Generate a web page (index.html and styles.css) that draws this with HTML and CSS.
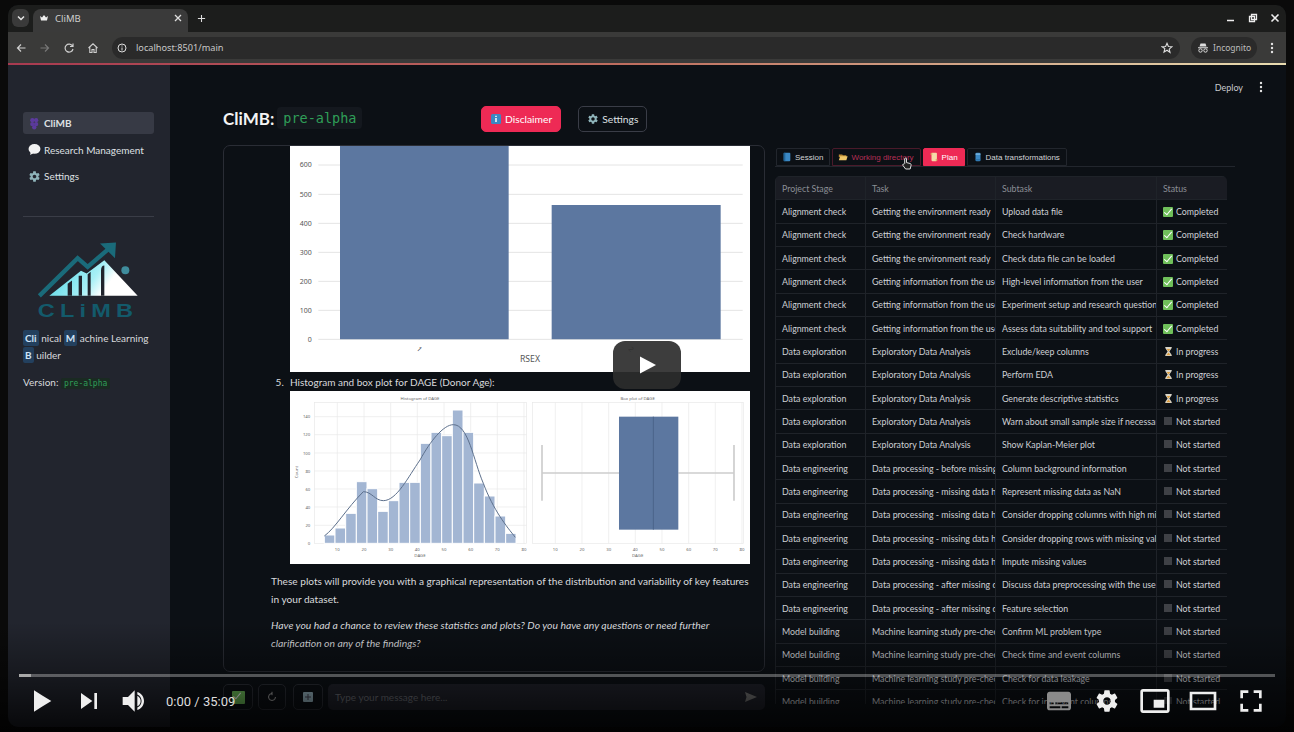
FILE: index.html
```html
<!DOCTYPE html>
<html>
	<head>
		<meta charset="utf-8">
		<title>CliMB</title>
		<link rel="stylesheet" href="styles.css">
	</head>
	<body>
		<svg class="defs">
			<symbol id="gear" viewBox="8 8 20 20"><path d="m23.94 18.78c.03-.25.05-.51.05-.78s-.02-.52-.05-.78l1.68-1.32c.15-.12.19-.33.09-.51l-1.6-2.76c-.09-.17-.31-.24-.48-.17l-1.99.8c-.41-.32-.86-.58-1.35-.78l-.3-2.12c-.02-.19-.19-.33-.39-.33h-3.2c-.2 0-.36.14-.39.33l-.3 2.12c-.48.2-.93.47-1.35.78l-1.99-.8c-.18-.07-.39 0-.48.17l-1.6 2.76c-.1.17-.05.39.09.51l1.68 1.32c-.03.25-.05.52-.05.78s.02.52.05.78l-1.68 1.32c-.15.12-.19.33-.09.51l1.6 2.76c.09.17.31.24.48.17l1.99-.8c.41.32.86.58 1.35.78l.3 2.12c.02.19.19.33.39.33h3.2c.2 0 .36-.14.39-.33l.3-2.12c.48-.2.93-.47 1.35-.78l1.99.8c.18.07.39 0 .48-.17l1.6-2.76c.09-.17.05-.39-.09-.51zm-5.94 2.01c-1.54 0-2.8-1.25-2.8-2.8s1.25-2.8 2.8-2.8 2.8 1.25 2.8 2.8-1.25 2.8-2.8 2.8z"/></symbol>
			<symbol id="kebab" viewBox="0 0 12 12"><circle cx="6" cy="2" r="1.2"/><circle cx="6" cy="6" r="1.2"/><circle cx="6" cy="10" r="1.2"/></symbol>
			<symbol id="book" viewBox="0 0 12 12"><rect x="2" y="1" width="8" height="10" rx="1" fill="#3b88c3"/><rect x="2" y="1" width="2" height="10" fill="#226699"/></symbol>
			<symbol id="can" viewBox="0 0 12 12"><rect x="3" y="1" width="6" height="10" rx="1.5" fill="#3b88c3"/><rect x="3" y="2" width="6" height="1" fill="#9fd0ee"/><rect x="3" y="9" width="6" height="1" fill="#1d5f8f"/></symbol>
			<symbol id="folder" viewBox="0 0 12 12"><path d="M1 3h4l1 1h4v2H1z" fill="#b98a35"/><path d="M1 10l1.5-5h9L10 10z" fill="#f0c869"/></symbol>
			<symbol id="scroll" viewBox="0 0 12 12"><rect x="3" y="1" width="6.5" height="10" rx="1" fill="#f6d9a8"/><rect x="2" y="1" width="2" height="3" rx="1" fill="#e0a868"/><rect x="8" y="8" width="2" height="3" rx="1" fill="#e0a868"/></symbol>
			<symbol id="hourglass" viewBox="0 0 12 12"><path d="M2.5 1h7v1.2L7 6l2.5 3.8V11h-7V9.800L5 6 2.500 2.200z" fill="#d8d4c8"/><path d="M4 3.200h4L6 6zM3.600 10 6 7l2.400 3z" fill="#e0a040"/></symbol>
		</svg>

		<div class="window">
			<div class="tabstrip">
				<span class="tab-search">
					<svg class="ico-10" viewBox="0 0 10 10"><path d="M2 3.500l3 3 3-3" fill="none" stroke="#e6e6e6" stroke-width="1.500"/></svg>
				</span>
				<div class="tab">
					<svg class="ico-10" viewBox="0 0 10 10"><path d="M1 3l2 1.500L5 2l2 2.500L9 3 8 7.500H2z" fill="#eee"/></svg>
					<span class="tab-title">CliMB</span>
					<svg class="ico-8" viewBox="0 0 8 8"><path d="M1 1l6 6M7 1L1 7" stroke="#ddd" stroke-width="1.300"/></svg>
				</div>
				<svg class="tab-new" viewBox="0 0 10 10"><path d="M5 1v8M1 5h8" stroke="#ddd" stroke-width="1.200"/></svg>
				<div class="win-controls">
					<svg class="ico-10" viewBox="0 0 10 10"><path d="M1 7.500h7" stroke="#eee" stroke-width="1.600"/></svg>
					<svg class="ico-10" viewBox="0 0 10 10"><path d="M3.500 1.500h5v5h-5zM1.500 3.500h5v5h-5z" fill="#151515" stroke="#eee" stroke-width="1.300"/></svg>
					<svg class="ico-10" viewBox="0 0 10 10"><path d="M1.500 1.500l7 7M8.500 1.500l-7 7" stroke="#eee" stroke-width="1.600"/></svg>
				</div>
			</div>

			<div class="toolbar">
				<svg class="nav-ico" viewBox="0 0 12 12"><path d="M10.500 6h-8M6 2.500L2.500 6 6 9.500" fill="none" stroke="#cfcfcf" stroke-width="1.200"/></svg>
				<svg class="nav-ico" viewBox="0 0 12 12"><path d="M1.500 6h8M6 2.500L9.500 6 6 9.500" fill="none" stroke="#777" stroke-width="1.200"/></svg>
				<svg class="nav-ico" viewBox="0 0 12 12"><path d="M9.500 4A4 4 0 1 0 10 7M10 1.500V4.500H7" fill="none" stroke="#cfcfcf" stroke-width="1.200"/></svg>
				<svg class="nav-ico" viewBox="0 0 12 12"><path d="M1.500 6L6 1.800 10.500 6M2.800 5v5.500h2.200V7.500h2v3h2.200V5" fill="none" stroke="#cfcfcf" stroke-width="1.100"/></svg>
				<div class="omnibox">
					<span class="omni-left">
						<svg class="ico-10" viewBox="0 0 10 10"><circle cx="5" cy="5" r="4" fill="none" stroke="#ddd"/><path d="M5 4.500v3M5 2.500v1" stroke="#ddd"/></svg>
						<span class="omni-url">localhost:8501/main</span>
					</span>
					<svg class="ico-12" viewBox="0 0 12 12"><path d="M6 1.300l1.400 3.200 3.400.3-2.600 2.300.8 3.400L6 8.200 3 10l.8-3.400L1.200 4.800l3.400-.3z" fill="none" stroke="#ddd" stroke-width="1.100"/></svg>
				</div>
				<div class="incognito">
					<svg class="ico-12" viewBox="0 0 12 12"><path d="M3.500 1.500h5l1 3h-7zM1 5.300h10v1H1z" fill="#ddd"/><circle cx="3.500" cy="8.500" r="1.700" fill="none" stroke="#ddd"/><circle cx="8.500" cy="8.500" r="1.700" fill="none" stroke="#ddd"/></svg>
					<span>Incognito</span>
				</div>
				<svg class="ico-12 kebab-light"><use href="#kebab"/></svg>
			</div>
			<div class="decoration"></div>

			<div class="app">
				<aside class="sidebar">
					<nav class="side-nav">
						<a class="side-link side-active">
							<svg class="side-ico" viewBox="0 0 12 12"><g fill="#5b3a9c"><circle cx="4" cy="3" r="2"/><circle cx="7.500" cy="3" r="2"/><circle cx="4" cy="6.500" r="2"/><circle cx="7.500" cy="6.500" r="2"/><circle cx="5.800" cy="9.500" r="2"/></g></svg>
							CliMB
						</a>
						<a class="side-link">
							<svg class="side-ico" viewBox="0 0 12 12"><ellipse cx="6" cy="5.500" rx="5.500" ry="4.500" fill="#f2f2f2"/><path d="M2.500 8L2 11l3.500-2z" fill="#f2f2f2"/></svg>
							Research Management
						</a>
						<a class="side-link">
							<svg class="side-ico gear-teal"><use href="#gear"/></svg>
							Settings
						</a>
					</nav>
					<hr class="side-rule">
					<svg class="logo" viewBox="110 55 315 245">
						<defs>
							<linearGradient id="peak" x1="0" y1="0" x2="1" y2="0.300">
								<stop offset="0" stop-color="#45d2e2"/>
								<stop offset="0.6" stop-color="#a8f0f6"/>
								<stop offset="0.8" stop-color="#ffffff"/>
							</linearGradient>
						</defs>
						<path d="M150 225L245 150 262 158 315 118 415 225z" fill="url(#peak)"/>
						<path d="M205 225v-36l13-10v46zM238 225v-60h10v60zM265 225v-65l9-7v72zM305 225v-75q0-16 10-16v91z" fill="#20242d"/>
						<path d="M120 225L235 112 265 138 335 78" fill="none" stroke="#1a6b7a" stroke-width="13"/>
						<path d="M302 68L350 65 347 112z" fill="#1a6b7a"/>
						<circle cx="378" cy="148" r="12" fill="#3f8c9c"/>
						<text class="logo-text" x="115" y="289" textLength="302" lengthAdjust="spacingAndGlyphs">CLiMB</text>
					</svg>
					<p class="side-blurb"><mark>Cli</mark> nical <mark>M</mark> achine Learning <mark>B</mark> uilder</p>
					<p class="side-version">Version: <code>pre-alpha</code></p>
				</aside>

				<main class="main">
					<div class="topbar">
						<span>Deploy</span>
						<svg class="ico-12 kebab-light"><use href="#kebab"/></svg>
					</div>
					<div class="title-row">
						<div class="title-block">
							<h1>CliMB:</h1>
							<code class="title-code">pre-alpha</code>
						</div>
						<button class="btn btn-primary">
							<svg class="ico-12" viewBox="0 0 12 12"><rect x="1" y="1" width="10" height="10" rx="1.500" fill="#3b88c3"/><path d="M6 5v4M6 2.800v1.200" stroke="#fff" stroke-width="1.500"/></svg>
							Disclaimer
						</button>
						<button class="btn">
							<svg class="ico-12 gear-teal"><use href="#gear"/></svg>
							Settings
						</button>
					</div>

					<div class="columns">
						<section class="chat-col">
							<div class="chat-panel">
								<div class="plot plot-bars">
									<svg viewBox="30 15 1380 678" class="plot-svg">
										<g stroke="#e4e4e4" stroke-width="3">
											<path d="M115 72H1388M115 160H1388M115 247H1388M115 334H1388M115 421H1388M115 508H1388M115 595H1388"/>
										</g>
										<path d="M180 15h506v580H180zM815 192h507v403H815z" fill="#5c77a0"/>
										<g class="plot-label" text-anchor="end">
											<text x="95" y="79">600</text>
											<text x="95" y="167">500</text>
											<text x="95" y="254">400</text>
											<text x="95" y="341">300</text>
											<text x="95" y="428">200</text>
											<text x="95" y="515">100</text>
											<text x="95" y="602">0</text>
										</g>
										<g class="plot-label" text-anchor="middle">
											<text x="418" y="632" transform="rotate(45 418 625)">1</text>
											<text x="1053" y="632" transform="rotate(45 1053 625)">2</text>
											<text class="plot-axis" x="750" y="664">RSEX</text>
										</g>
									</svg>
								</div>
								<ol class="chat-list" start="5">
									<li>Histogram and box plot for DAGE (Donor Age):
										<div class="plot plot-hist">
											<svg viewBox="30 33 1380 517" class="plot-svg">
												<g fill="none" stroke="#e8e8e8" stroke-width="2">
													<rect x="103" y="68" width="637" height="422"/>
													<rect x="757" y="68" width="633" height="422"/>
													<path d="M103 110H740M103 164H740M103 219H740M103 273H740M103 327H740M103 381H740M103 436H740"/>
													<path d="M172 68V490M252 68V490M332 68V490M412 68V490M492 68V490M572 68V490M652 68V490M732 68V490"/>
													<path d="M826 68V490M906 68V490M986 68V490M1066 68V490M1146 68V490M1226 68V490M1306 68V490M1386 68V490"/>
												</g>
												<g fill="#a3b6d3" stroke="#fff" stroke-width="3">
													<rect x="133" y="465" width="32" height="25"/>
													<rect x="165" y="444" width="32" height="46"/>
													<rect x="197" y="400" width="32" height="90"/>
													<rect x="229" y="305" width="32" height="185"/>
													<rect x="261" y="326" width="32" height="164"/>
													<rect x="293" y="394" width="32" height="96"/>
													<rect x="325" y="362" width="32" height="128"/>
													<rect x="357" y="307" width="32" height="183"/>
													<rect x="389" y="307" width="32" height="183"/>
													<rect x="421" y="190" width="32" height="300"/>
													<rect x="453" y="157" width="32" height="333"/>
													<rect x="485" y="167" width="32" height="323"/>
													<rect x="517" y="90" width="32" height="400"/>
													<rect x="549" y="157" width="32" height="333"/>
													<rect x="581" y="309" width="32" height="181"/>
													<rect x="613" y="348" width="32" height="142"/>
													<rect x="645" y="408" width="32" height="82"/>
													<rect x="677" y="460" width="31" height="30"/>
												</g>
												<path d="M133 468C165 445 200 385 250 335C275 335 285 362 310 362C350 362 385 290 420 240C450 185 490 134 520 134C565 134 580 240 610 310C640 390 680 440 706 472" fill="none" stroke="#5c6f8c" stroke-width="3"/>
												<path d="M788 279H1017M1195 279H1362M786 195V362M1362 195V362" fill="none" stroke="#cdcdcd" stroke-width="5"/>
												<rect x="1017" y="110" width="178" height="339" fill="#5c77a0"/>
												<path d="M1120 110V449" stroke="#4a638a" stroke-width="3"/>
												<g class="plot-tick" text-anchor="end">
													<text x="91" y="115">140</text>
													<text x="91" y="169">120</text>
													<text x="91" y="224">100</text>
													<text x="91" y="278">80</text>
													<text x="91" y="332">60</text>
													<text x="91" y="386">40</text>
													<text x="91" y="441">20</text>
													<text x="91" y="494">0</text>
												</g>
												<g class="plot-tick" text-anchor="middle">
													<text x="172" y="512">10</text>
													<text x="252" y="512">20</text>
													<text x="332" y="512">30</text>
													<text x="412" y="512">40</text>
													<text x="492" y="512">50</text>
													<text x="572" y="512">60</text>
													<text x="652" y="512">70</text>
													<text x="732" y="512">80</text>
													<text x="826" y="512">10</text>
													<text x="906" y="512">20</text>
													<text x="986" y="512">30</text>
													<text x="1066" y="512">40</text>
													<text x="1146" y="512">50</text>
													<text x="1226" y="512">60</text>
													<text x="1306" y="512">70</text>
													<text x="1386" y="512">80</text>
													<text x="420" y="60">Histogram of DAGE</text>
													<text x="1073" y="60">Box plot of DAGE</text>
													<text x="420" y="531">DAGE</text>
													<text x="1073" y="531">DAGE</text>
													<text x="58" y="280" transform="rotate(-90 54 280)">Count</text>
												</g>
											</svg>
										</div>
									</li>
								</ol>
								<p class="chat-text">These plots will provide you with a graphical representation of the distribution and variability of key features in your dataset.</p>
								<p class="chat-text"><em>Have you had a chance to review these statistics and plots? Do you have any questions or need further clarification on any of the findings?</em></p>
							</div>
							<div class="chat-input-row">
								<span class="square-btn square-wide"><i class="st-check st-check-big"></i></span>
								<span class="square-btn square-refresh">
									<svg class="ico-12" viewBox="0 0 12 12"><path d="M9.500 6A3.500 3.500 0 1 1 6 2.500M6 .8v3.400" fill="none" stroke="#aaa"/></svg>
								</span>
								<span class="square-btn square-wide">
									<svg class="ico-12" viewBox="0 0 12 12"><rect x="1" y="1" width="10" height="10" rx="1" fill="#9ab8c4"/><path d="M3 6h6M6 3v6" stroke="#445"/></svg>
								</span>
								<div class="chat-input">
									<span>Type your message here...</span>
									<svg class="ico-12" viewBox="0 0 12 12"><path d="M0 1l12 5L0 11l1.500-5z" fill="#777"/></svg>
								</div>
							</div>
						</section>

						<section class="plan-col">
							<div class="tabs">
								<span class="tab-btn"><svg class="ico-10"><use href="#book"/></svg>Session</span>
								<span class="tab-btn tab-hover"><svg class="ico-10"><use href="#folder"/></svg>Working directory
									<svg class="hand" viewBox="0 0 12 14"><path d="M4 7V2a1 1 0 0 1 2 0v4l4 1c1 .3 1 1 1 2l-1 4H5L2 9c-.6-.8.4-1.800 1.200-1.100z" fill="#222" stroke="#eee"/></svg>
								</span>
								<span class="tab-btn tab-active"><svg class="ico-10"><use href="#scroll"/></svg>Plan</span>
								<span class="tab-btn"><svg class="ico-10"><use href="#can"/></svg>Data transformations</span>
							</div>
							<div class="plan-table-wrap">
								<table class="plan-table">
									<colgroup><col class="col-stage"><col class="col-task"><col class="col-sub"><col class="col-status"></colgroup>
									<thead>
										<tr><th>Project Stage</th><th>Task</th><th>Subtask</th><th>Status</th></tr>
									</thead>
									<tbody>
										<tr><td>Alignment check</td><td>Getting the environment ready</td><td>Upload data file</td><td><i class="st-check"></i>Completed</td></tr>
										<tr><td>Alignment check</td><td>Getting the environment ready</td><td>Check hardware</td><td><i class="st-check"></i>Completed</td></tr>
										<tr><td>Alignment check</td><td>Getting the environment ready</td><td>Check data file can be loaded</td><td><i class="st-check"></i>Completed</td></tr>
										<tr><td>Alignment check</td><td>Getting information from the user</td><td>High-level information from the user</td><td><i class="st-check"></i>Completed</td></tr>
										<tr><td>Alignment check</td><td>Getting information from the user</td><td>Experiment setup and research question</td><td><i class="st-check"></i>Completed</td></tr>
										<tr><td>Alignment check</td><td>Getting information from the user</td><td>Assess data suitability and tool support</td><td><i class="st-check"></i>Completed</td></tr>
										<tr><td>Data exploration</td><td>Exploratory Data Analysis</td><td>Exclude/keep columns</td><td><svg class="st-glass"><use href="#hourglass"/></svg>In progress</td></tr>
										<tr><td>Data exploration</td><td>Exploratory Data Analysis</td><td>Perform EDA</td><td><svg class="st-glass"><use href="#hourglass"/></svg>In progress</td></tr>
										<tr><td>Data exploration</td><td>Exploratory Data Analysis</td><td>Generate descriptive statistics</td><td><svg class="st-glass"><use href="#hourglass"/></svg>In progress</td></tr>
										<tr><td>Data exploration</td><td>Exploratory Data Analysis</td><td>Warn about small sample size if necessary</td><td><i class="st-none"></i>Not started</td></tr>
										<tr><td>Data exploration</td><td>Exploratory Data Analysis</td><td>Show Kaplan-Meier plot</td><td><i class="st-none"></i>Not started</td></tr>
										<tr><td>Data engineering</td><td>Data processing - before missing data</td><td>Column background information</td><td><i class="st-none"></i>Not started</td></tr>
										<tr><td>Data engineering</td><td>Data processing - missing data handling</td><td>Represent missing data as NaN</td><td><i class="st-none"></i>Not started</td></tr>
										<tr><td>Data engineering</td><td>Data processing - missing data handling</td><td>Consider dropping columns with high missingness</td><td><i class="st-none"></i>Not started</td></tr>
										<tr><td>Data engineering</td><td>Data processing - missing data handling</td><td>Consider dropping rows with missing values</td><td><i class="st-none"></i>Not started</td></tr>
										<tr><td>Data engineering</td><td>Data processing - missing data handling</td><td>Impute missing values</td><td><i class="st-none"></i>Not started</td></tr>
										<tr><td>Data engineering</td><td>Data processing - after missing data</td><td>Discuss data preprocessing with the user</td><td><i class="st-none"></i>Not started</td></tr>
										<tr><td>Data engineering</td><td>Data processing - after missing data</td><td>Feature selection</td><td><i class="st-none"></i>Not started</td></tr>
										<tr><td>Model building</td><td>Machine learning study pre-checks</td><td>Confirm ML problem type</td><td><i class="st-none"></i>Not started</td></tr>
										<tr><td>Model building</td><td>Machine learning study pre-checks</td><td>Check time and event columns</td><td><i class="st-none"></i>Not started</td></tr>
										<tr><td>Model building</td><td>Machine learning study pre-checks</td><td>Check for data leakage</td><td><i class="st-none"></i>Not started</td></tr>
										<tr><td>Model building</td><td>Machine learning study pre-checks</td><td>Check for irrelevant columns</td><td><i class="st-none"></i>Not started</td></tr>
									</tbody>
								</table>
							</div>
						</section>
					</div>
				</main>
			</div>
		</div>

		<!-- video player chrome sits over the whole page -->
		<div class="yt-shade"></div>
		<div class="yt-bigplay">
			<svg class="yt-bigplay-ico" viewBox="0 0 24 24"><path d="M5 3.500L21 12 5 20.500z" fill="#fff"/></svg>
		</div>
		<div class="yt-player">
			<div class="yt-progress"><div class="yt-played"></div></div>
			<div class="yt-controls">
				<div class="yt-group">
					<svg class="yt-ico" viewBox="0 0 36 36"><path d="M12 26l6.500-4v-8L12 10zM18.500 22L25 18l-6.500-4z"/></svg>
					<svg class="yt-ico" viewBox="0 0 36 36"><path d="M12 24l8.500-6L12 12zM22 12v12h2V12z"/></svg>
					<svg class="yt-ico" viewBox="0 0 36 36"><path d="M8 21h4l5 5V10l-5 5H8zM19 14v8c1.480-.68 2.500-2.230 2.500-4 0-1.740-1.020-3.260-2.500-4zM19 11.290c2.890.86 5 3.540 5 6.710s-2.110 5.850-5 6.710v-1.800c1.900-.8 3.200-2.700 3.200-4.910s-1.300-4.110-3.200-4.910z"/></svg>
					<span class="yt-time">0:00 / 35:09</span>
				</div>
				<div class="yt-group">
					<svg class="yt-ico yt-dim" viewBox="0 0 36 36"><path fill-rule="evenodd" d="M11 11c-1.100 0-2 .9-2 2v10c0 1.100.9 2 2 2h14c1.100 0 2-.9 2-2V13c0-1.100-.9-2-2-2zM11 19h3v1.500h-3zM15 19h10v1.500H15zM11 22h8v1.500h-8zM20 22h5v1.500h-5z"/></svg>
					<svg class="yt-ico" viewBox="0 0 36 36"><use href="#gear" x="8" y="8" width="20" height="20"/></svg>
					<svg class="yt-ico" viewBox="0 0 36 36"><path d="M25 17h-8v6h8zM29 25V10.980C29 9.880 28.100 9 27 9H9c-1.100 0-2 .88-2 1.980V25c0 1.100.9 2 2 2h18c1.100 0 2-.9 2-2zm-2 .02H9V10.970h18z"/></svg>
					<svg class="yt-ico" viewBox="0 0 36 36"><path fill-rule="evenodd" d="M28 11v14H8V11zM10 13v10h16V13z"/></svg>
					<svg class="yt-ico" viewBox="0 0 36 36"><path d="M10 16h2v-4h4v-2h-6zM20 10v2h4v4h2v-6zM24 24h-4v2h6v-6h-2zM12 20h-2v6h6v-2h-4z"/></svg>
				</div>
			</div>
		</div>
	</body>
</html>
```

FILE: styles.css
```css
html, body {
	margin: 0;
	height: 732px;
	overflow: hidden;
	background-color: #0a0a0a;
	font-family: "Lato", "Noto Sans", sans-serif;
	font-size: 10px;
	color: #d9dadd;
}

body {
	position: relative;
}

.defs {
	display: none;
}

.ico-8 { width: 8px; height: 8px; flex: none; }
.ico-10 { width: 10px; height: 10px; flex: none; }
.ico-12 { width: 12px; height: 12px; flex: none; }

.kebab-light { fill: #e4e4e4; }
.gear-teal { fill: #8fb4ba; }

.window {
	margin: 5px 8px 0;
	width: 1278px;
	height: 722px;
	border-radius: 10px;
	overflow: hidden;
	display: flex;
	flex-direction: column;
	background-color: #0c1015;
}

/* browser chrome */
.tabstrip {
	height: 27px;
	flex: none;
	display: flex;
	align-items: flex-end;
	background-color: #1c1d1c;
	padding-left: 4px;
}

.tab-search {
	width: 17px;
	height: 18px;
	margin-bottom: 5px;
	border-radius: 6px;
	background-color: #3a3a3a;
	display: flex;
	align-items: center;
	justify-content: center;
}

.tab {
	width: 155px;
	height: 23px;
	margin-left: 4px;
	padding: 0 6px 5px 6px;
	box-sizing: border-box;
	border-radius: 8px 8px 0 0;
	background-color: #3a3a3a;
	display: flex;
	align-items: center;
	gap: 6px;
}

.tab-title {
	flex: 1;
	font-family: "Noto Sans", sans-serif;
	font-size: 9.500px;
	color: #cfcfcf;
}

.tab-new {
	width: 9px;
	height: 9px;
	margin: 0 0 9px 9px;
}

.win-controls {
	margin-left: auto;
	margin-right: 6px;
	margin-bottom: 9px;
	display: flex;
	gap: 12px;
}

.toolbar {
	height: 31px;
	flex: none;
	display: flex;
	align-items: center;
	padding: 0 7px 0 7px;
	background-color: #3a3a39;
}

.nav-ico {
	width: 12px;
	height: 12px;
	flex: none;
	margin-right: 12px;
}

.omnibox {
	width: 1068px;
	height: 22px;
	margin-left: 1px;
	margin-right: 11px;
	padding: 0 7px 0 5px;
	box-sizing: border-box;
	border-radius: 11px;
	background-color: #2a2a2a;
	display: flex;
	align-items: center;
	justify-content: space-between;
}

.omni-left {
	display: flex;
	align-items: center;
	gap: 9px;
}

.omni-url {
	font-family: "Noto Sans", sans-serif;
	font-size: 9.200px;
	color: #c8c8c8;
}

.incognito {
	width: 66px;
	height: 22px;
	padding-left: 6px;
	box-sizing: border-box;
	border-radius: 11px;
	background-color: #2a2a2a;
	display: flex;
	align-items: center;
	gap: 4px;
	font-family: "Noto Sans", sans-serif;
	font-size: 8.500px;
	color: #bdbdbd;
	margin-right: 9px;
}

.decoration {
	height: 2px;
	flex: none;
	background: linear-gradient(90deg, #a83a50, #c07060 50%, #e8dcb0);
}

/* streamlit app */
.app {
	flex: 1;
	min-height: 0;
	display: flex;
}

.sidebar {
	width: 162px;
	flex: none;
	box-sizing: border-box;
	padding: 47px 16px 0 15px;
	background-color: #22252e;
}

.side-nav {
	display: flex;
	flex-direction: column;
	gap: 4.500px;
}

.side-link {
	height: 22px;
	padding-left: 5px;
	border-radius: 3px;
	display: flex;
	align-items: center;
	gap: 3px;
	color: #dfe0e3;
}

.side-ico {
	width: 13px;
	height: 13px;
	flex: none;
}

.side-active {
	background-color: #373a45;
	font-weight: 700;
}

.side-rule {
	margin: 29px 0 22px;
	border: 0;
	border-top: 1px solid #3a3d47;
}

.logo {
	display: block;
	width: 105px;
	height: 82px;
	margin-left: 13px;
}

.logo-text {
	font-family: "Liberation Sans", sans-serif;
	font-size: 54px;
	font-weight: 700;
	letter-spacing: 12px;
	fill: #135a6b;
}

.side-blurb {
	margin: 9px 0 0;
	line-height: 16.500px;
}

.side-blurb mark {
	padding: 2px 2px;
	border-radius: 2px;
	background-color: #23405e;
	color: #cfe3f7;
	font-weight: 700;
}

.side-version {
	margin: 13px 0 0;
}

.side-version code {
	padding: 1px 3px;
	border-radius: 2px;
	background-color: #1a2a22;
	color: #2f9e58;
	font-family: "DejaVu Sans Mono", monospace;
	font-size: 8px;
}

.main {
	flex: 1;
	min-width: 0;
	box-sizing: border-box;
	padding: 0 0 0 53px;
}

.topbar {
	height: 41px;
	padding-right: 19px;
	box-sizing: border-box;
	display: flex;
	align-items: center;
	justify-content: flex-end;
	gap: 12px;
	font-size: 9px;
	color: #c9cacd;
	padding-top: 3px;
}

.title-row {
	height: 26px;
	display: flex;
	align-items: center;
	gap: 17px;
}

.title-block {
	width: 241px;
	padding-bottom: 2px;
	display: flex;
	align-items: center;
	gap: 3px;
}

h1 {
	margin: 0;
	font-size: 17px;
	font-weight: 700;
	color: #f4f4f4;
}

.title-code {
	padding: 3px 6px;
	border-radius: 4px;
	background-color: #14181e;
	color: #2f9e58;
	font-family: "DejaVu Sans Mono", monospace;
	font-size: 13.500px;
}

.btn {
	height: 26px;
	padding: 0 8px;
	border: 1px solid #3a3d47;
	border-radius: 5px;
	background-color: transparent;
	display: flex;
	align-items: center;
	gap: 3px;
	font-family: inherit;
	font-size: 10.300px;
	color: #dfe0e3;
}

.btn-primary {
	border-color: #ee2a55;
	background-color: #ee2a55;
	color: #fff;
}

.columns {
	margin-top: 13px;
	display: flex;
	gap: 10px;
}

.chat-col {
	width: 542px;
	flex: none;
}

.chat-panel {
	height: 527px;
	box-sizing: border-box;
	padding: 0 14px 0 47px;
	border: 1px solid #2a2d35;
	border-radius: 7px;
	overflow: hidden;
}

.plot {
	background-color: #fff;
	width: 460px;
	margin-left: 19px;
}

.plot-svg {
	display: block;
	width: 100%;
}

.plot-bars {
	height: 226px;
}

.plot-hist {
	margin-left: 0;
	margin-top: 1px;
	height: 173px;
}

.plot-label text {
	font-family: "Noto Sans", sans-serif;
	font-size: 21px;
	fill: #555;
}

.plot-label .plot-axis {
	font-size: 26px;
}

.plot-tick text {
	font-family: "Noto Sans", sans-serif;
	font-size: 13px;
	fill: #666;
}

.chat-list {
	margin: 2px 0 0;
	padding-left: 19px;
	line-height: 16px;
}

.chat-list li::marker {
	content: counter(list-item) ".\2002\2009";
}

.chat-text {
	margin: 9px 0 0;
	line-height: 17.500px;
	font-size: 10.150px;
}

.chat-text em {
	font-size: 10.400px;
}

.chat-input-row {
	margin-top: 12px;
	height: 26px;
	display: flex;
	gap: 5px;
}

.square-btn {
	width: 28px;
	flex: none;
	border: 1px solid #2a2d35;
	border-radius: 5px;
	box-sizing: border-box;
	display: flex;
	align-items: center;
	justify-content: center;
}

.square-wide {
	width: 30px;
}

.square-refresh {
	margin-right: 2px;
}

.chat-input {
	flex: 1;
	padding: 0 8px 0 7px;
	border-radius: 5px;
	background-color: #20222b;
	display: flex;
	align-items: center;
	justify-content: space-between;
	color: #6d6f77;
}

.plan-col {
	width: 460px;
	flex: none;
	padding-top: 3px;
}

.tabs {
	height: 18px;
	padding-left: 1px;
	display: flex;
	gap: 2px;
	border-bottom: 1px solid #22262d;
}

.tab-btn {
	position: relative;
	padding: 0 6px 0 5px;
	border: 1px solid #22262d;
	border-radius: 2px 2px 0 0;
	display: flex;
	align-items: center;
	gap: 3px;
	font-family: "Liberation Sans", sans-serif;
	font-size: 8px;
	color: #d2d3d6;
}

.tab-hover {
	border-color: #4a1a2a;
	color: #b52f55;
}

.tab-active {
	border-color: #ee2a55;
	background-color: #ee2a55;
	color: #fff;
}

.hand {
	position: absolute;
	right: 8px;
	top: 8px;
	width: 11px;
	height: 13px;
}

.plan-table-wrap {
	margin-top: 9px;
	width: 452px;
	height: 528px;
	overflow: hidden;
	border-radius: 5px 5px 0 0;
}

.plan-table {
	width: 452px;
	table-layout: fixed;
	border-collapse: collapse;
	font-size: 8.800px;
}

.col-stage { width: 90px; }
.col-task { width: 130px; }
.col-sub { width: 161px; }
.col-status { width: 71px; }

.plan-table th,
.plan-table td {
	height: 23.330px;
	padding: 0 6px;
	box-sizing: border-box;
	border: 1px solid #1f2329;
	white-space: nowrap;
	overflow: hidden;
	text-align: left;
	font-weight: 400;
	color: #cfd1d5;
}

.plan-table th {
	background-color: #1a1c23;
	color: #8b8e95;
}

.st-check {
	display: inline-block;
	position: relative;
	width: 10px;
	height: 10px;
	margin-right: 3px;
	border-radius: 1px;
	background-color: #6fbf5a;
	vertical-align: -2px;
}

.st-check::after {
	content: "";
	position: absolute;
	left: 3px;
	top: 0;
	width: 3px;
	height: 7px;
	border: solid #fff;
	border-width: 0 1.500px 1.500px 0;
	transform: rotate(40deg);
}

.st-check-big {
	width: 13px;
	height: 13px;
	margin-right: 0;
}

.st-glass {
	width: 11px;
	height: 11px;
	margin-right: 2px;
	vertical-align: -2px;
}

.st-none {
	display: inline-block;
	width: 8px;
	height: 8px;
	margin: 0 4px 0 1px;
	background-color: #3f4146;
}

/* video overlay */
.yt-shade {
	position: absolute;
	left: 0;
	right: 0;
	bottom: 0;
	height: 110px;
	background: linear-gradient(180deg, rgba(0, 0, 0, 0), rgba(0, 0, 0, 0.35) 50%, rgba(0, 0, 0, 0.8));
}

.yt-bigplay {
	position: absolute;
	left: 613px;
	top: 341px;
	width: 68px;
	height: 48px;
	border-radius: 12px;
	background-color: rgba(45, 45, 45, 0.92);
	display: flex;
	align-items: center;
	justify-content: center;
}

.yt-bigplay-ico {
	width: 24px;
	height: 24px;
}

.yt-player {
	position: absolute;
	left: 19px;
	right: 19px;
	top: 674px;
}

.yt-progress {
	height: 3px;
	background-color: rgba(255, 255, 255, 0.3);
}

.yt-played {
	width: 12px;
	height: 100%;
	background-color: #a9a9a9;
}

.yt-controls {
	height: 48px;
	margin-left: -1px;
	display: flex;
	justify-content: space-between;
}

.yt-group {
	display: flex;
	align-items: center;
}

.yt-ico {
	width: 48px;
	height: 48px;
	fill: #eee;
	margin-right: -1px;
}

.yt-group + .yt-group .yt-ico {
	margin-right: 0;
}

.yt-dim {
	fill: #8a8a8a;
}

.yt-time {
	margin-left: 7px;
	font-family: "Roboto", sans-serif;
	font-size: 13px;
	color: #ddd;
}
```
